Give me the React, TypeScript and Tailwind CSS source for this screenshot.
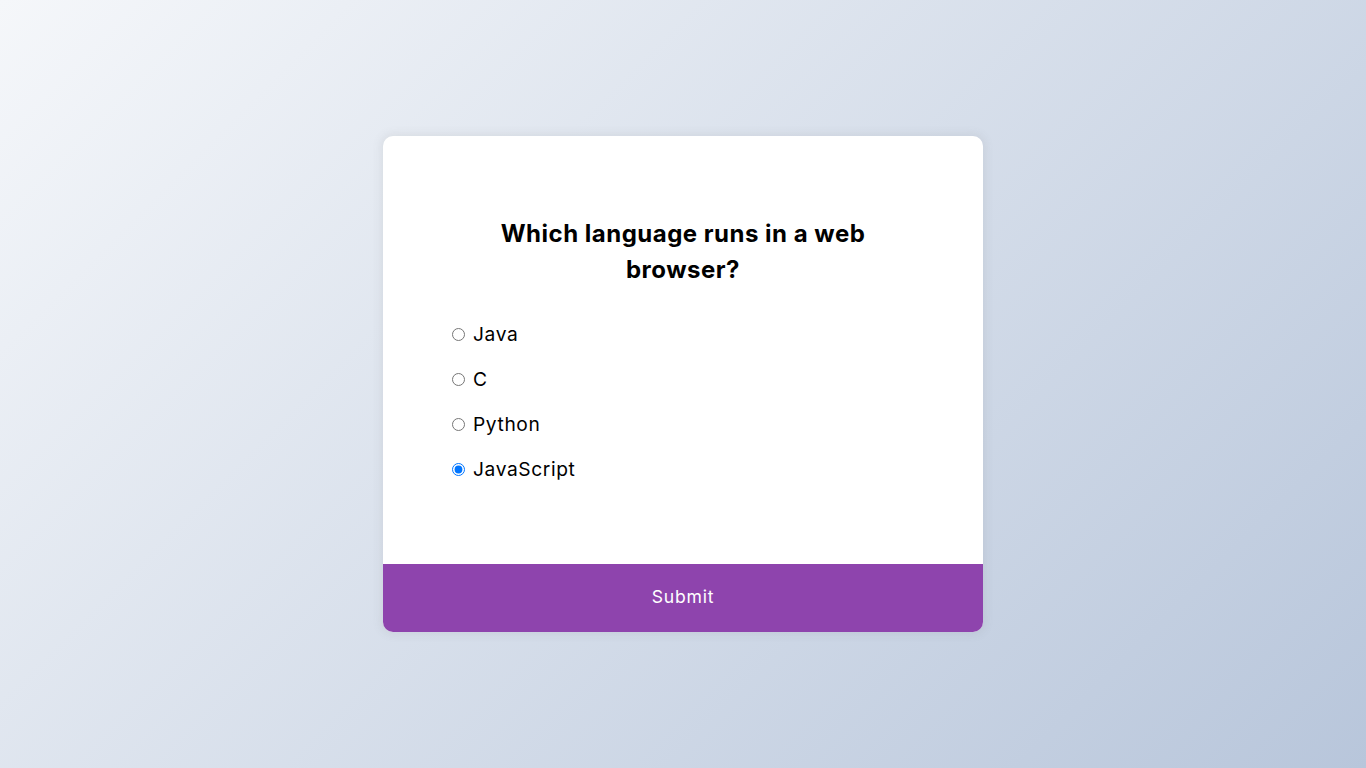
import React, { useState } from "react";

const options = ["Java", "C", "Python", "JavaScript"];

export default function App() {
  const [sel, setSel] = useState("JavaScript");
  return (
    <div
      className="h-screen w-full flex items-center justify-center overflow-hidden bg-[#b8c6db] bg-[linear-gradient(315deg,#b8c6db_0%,#f5f7fa_100%)]"
      style={{ fontFamily: "Inter, 'Open Sans', sans-serif" }}
    >
      <div className="w-[600px] bg-white rounded-[10px] overflow-hidden shadow-[0_0_10px_2px_rgba(100,100,100,0.1)]">
        <div className="p-16">
          <h2 className="p-4 text-center text-[24px] leading-[36px] font-bold tracking-[0.5px] text-black">
            Which language runs in a web browser?
          </h2>
          <ul className="my-4">
            {options.map((o) => (
              <li key={o} className="my-4 flex items-center text-[19.2px] leading-[28.8px] tracking-[0.6px] text-black">
                <input
                  type="radio"
                  name="answer"
                  id={o}
                  checked={sel === o}
                  onChange={() => setSel(o)}
                  className="ml-[5px] mr-[8px] w-[13px] h-[13px]"
                />
                <label htmlFor={o}>{o}</label>
              </li>
            ))}
          </ul>
        </div>
        <button className="block w-full bg-[#8e44ad] text-white text-[17.6px] leading-[26.4px] tracking-[0.8px] py-[20.8px] cursor-pointer">
          Submit
        </button>
      </div>
    </div>
  );
}
